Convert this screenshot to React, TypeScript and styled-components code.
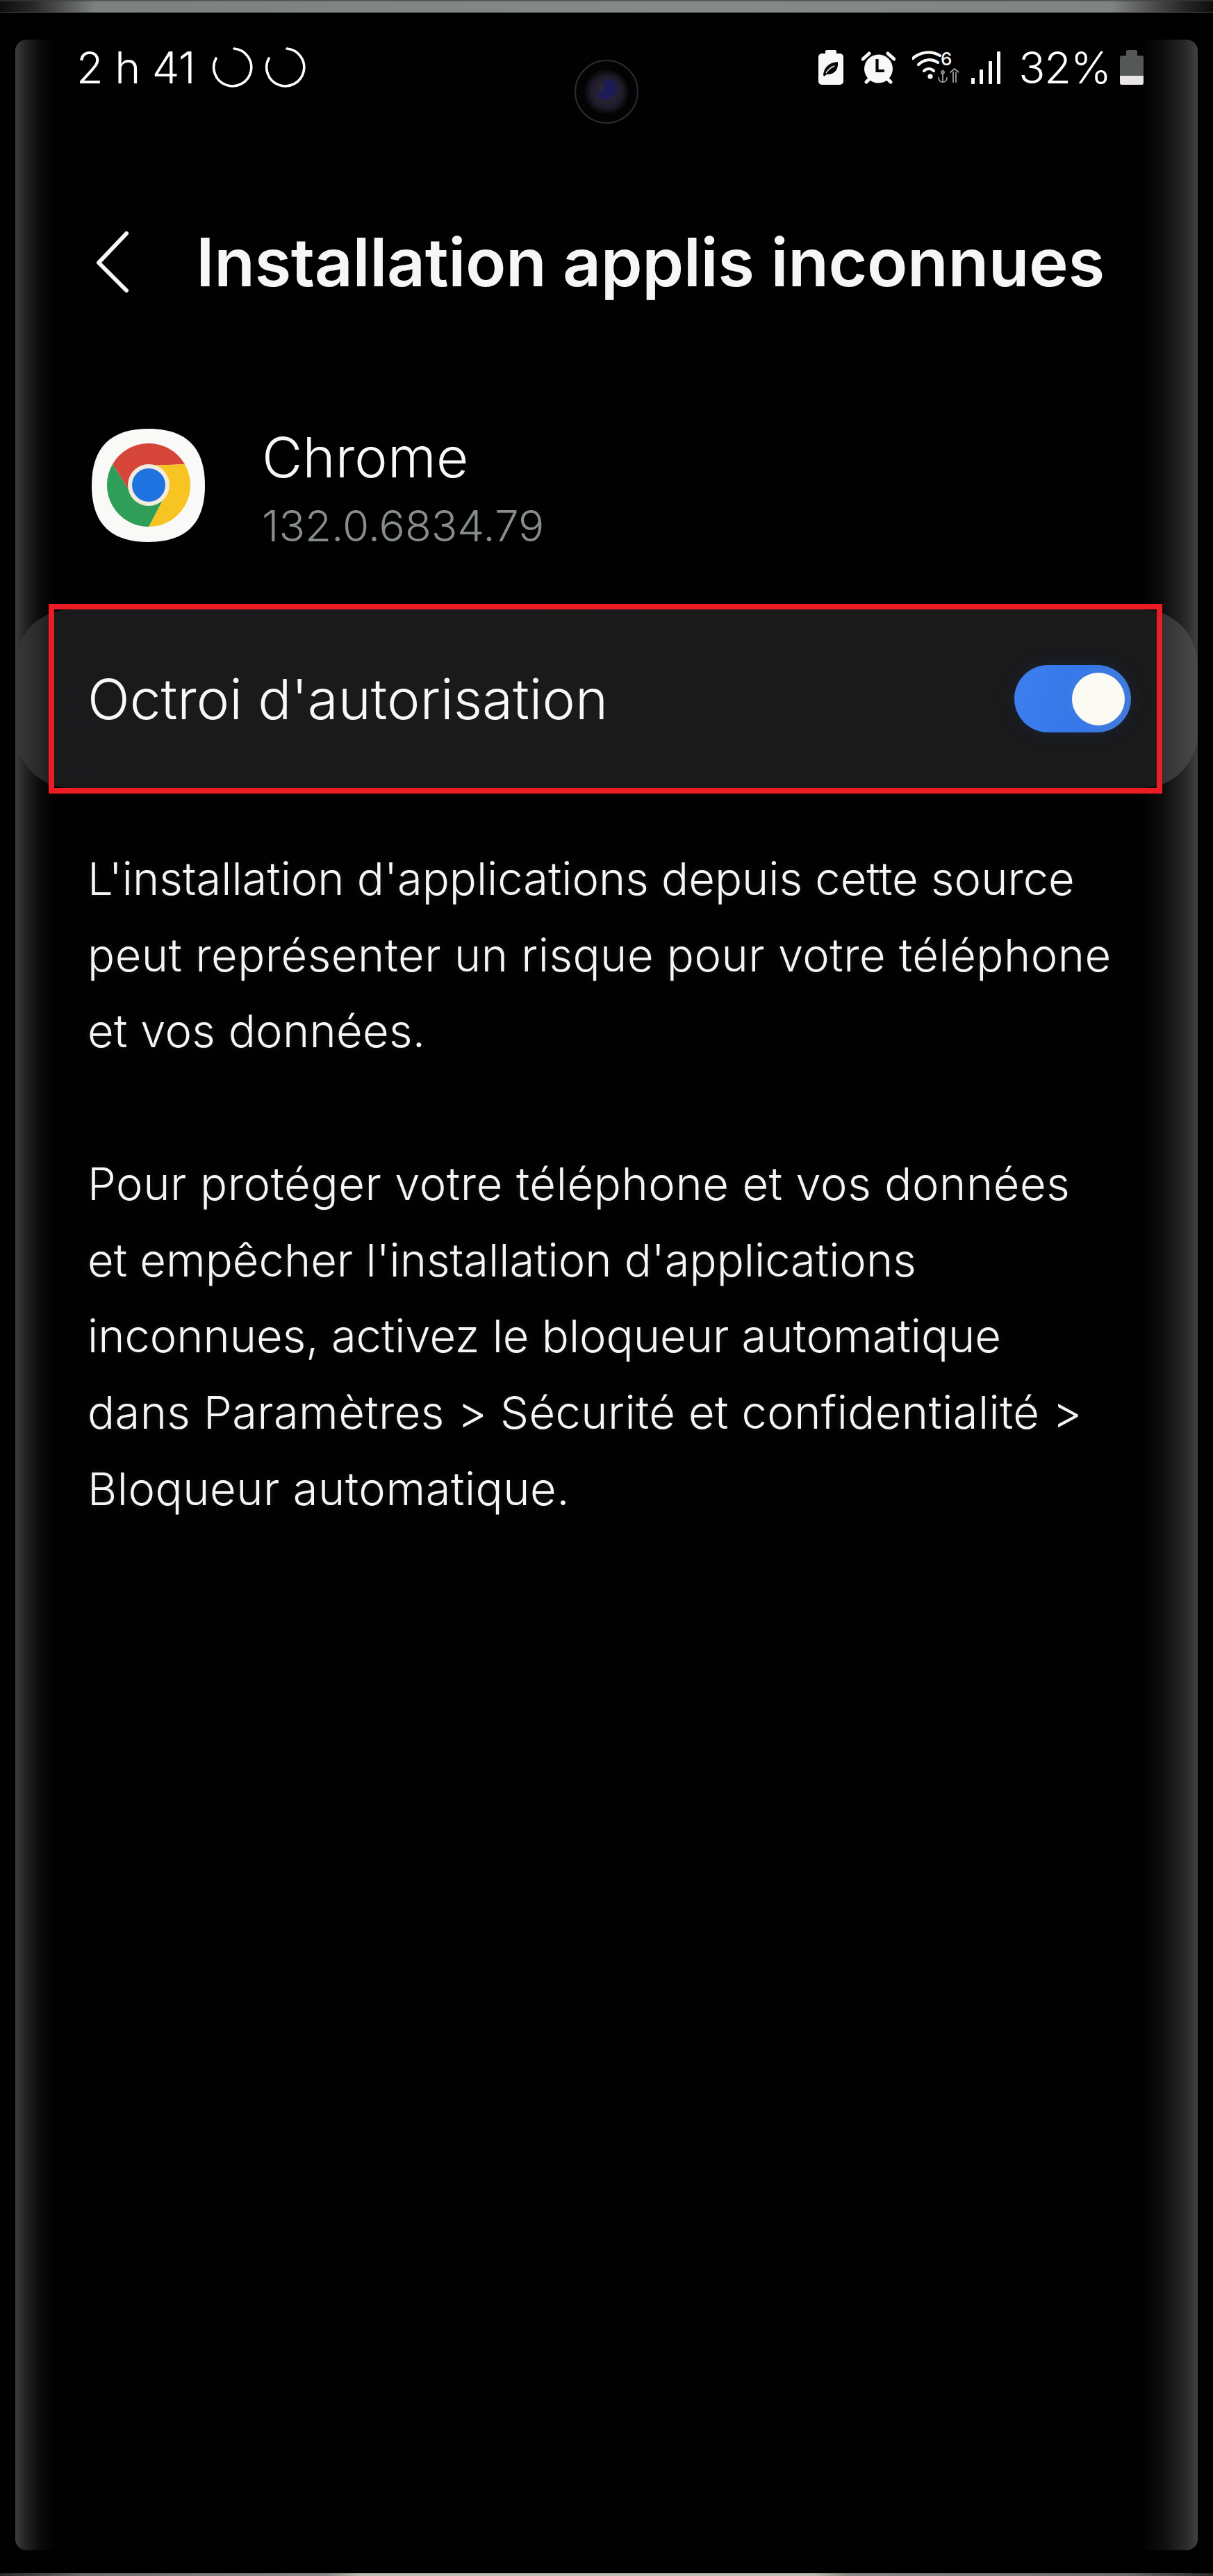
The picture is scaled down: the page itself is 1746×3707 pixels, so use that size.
import React from "react";
import styled, { createGlobalStyle } from "styled-components";

const Global = createGlobalStyle`
  html, body { margin: 0; padding: 0; background: #000; }
  #root { width: 1746px; height: 3707px; overflow: hidden; }
`;

const Device = styled.div`
  width: 1746px;
  height: 3707px;
  display: flex;
  flex-direction: column;
  background: #000;
  color: #fff;
  font-family: Inter, "Liberation Sans", sans-serif;
`;

const TopBezel = styled.div`
  height: 18px;
  flex: none;
  background: linear-gradient(90deg, #0d0d0d 0, #2a2a2a 50px, #7c807f 135px, #858988 1000px, #7f8382 1600px, #2a2a2a 1700px, #0d0d0d 1746px);
  box-shadow: inset 0 2px 0 rgba(60, 60, 60, 0.6), inset 0 -1px 0 rgba(190, 190, 190, 0.35);
`;

const BezelCorners = styled.div`
  flex: 1;
  min-height: 0;
  display: flex;
  background: #000;
  border-radius: 22px 22px 0 0;
  padding: 39px 22px 33px;
  position: relative;
`;

const Panel = styled.main`
  flex: 1;
  min-width: 0;
  display: flex;
  flex-direction: column;
  border-radius: 16px;
  background:
    linear-gradient(90deg, #3c3e3e 0, #232424 14px, #0b0b0b 36px, rgba(0, 0, 0, 0) 56px),
    linear-gradient(270deg, #404242 0, #272828 18px, #0d0d0d 50px, rgba(0, 0, 0, 0) 82px),
    #010101;
`;

const StatusBar = styled.header`
  height: 80px;
  flex: none;
  display: flex;
  align-items: center;
  justify-content: space-between;
  padding: 0 78px 0 88px;
  font-size: 63px;
  font-weight: 300;
  line-height: 1;
`;

const StatusGroup = styled.div`
  display: flex;
  align-items: center;
`;

const Clock = styled.span`
  letter-spacing: -0.6px;
  margin-right: 24px;
`;

const SyncRing = styled.svg`
  width: 60px;
  height: 60px;
  margin-right: 16px;
  display: block;
`;

const StatusIcon = styled.svg<{ $gap: number }>`
  display: block;
  flex: none;
  margin-right: ${(p) => p.$gap}px;
`;

const Percent = styled.span`
  letter-spacing: -1px;
  margin-right: 13px;
`;

const Camera = styled.svg`
  position: absolute;
  left: 826px;
  top: 67px;
  width: 94px;
  height: 94px;
`;

const TitleBar = styled.div`
  display: flex;
  align-items: center;
  height: 165px;
  margin-top: 157px;
  padding-left: 116px;
  flex: none;
`;

const BackChevron = styled.svg`
  width: 48px;
  height: 90px;
  margin-right: 96px;
  flex: none;
`;

const Title = styled.h1`
  margin: 0;
  font-size: 96px;
  font-weight: 600;
  letter-spacing: -0.4px;
  line-height: 1;
  color: #f6f6f6;
  white-space: nowrap;
`;

const AppRow = styled.section`
  display: flex;
  align-items: center;
  height: 163px;
  margin-top: 158px;
  padding-left: 110px;
  flex: none;
`;

const AppIcon = styled.svg`
  width: 163px;
  height: 163px;
  margin-right: 82px;
  flex: none;
`;

const AppText = styled.div`
  display: flex;
  flex-direction: column;
  gap: 18px;
  padding-top: 6px;
`;

const AppName = styled.span`
  font-size: 80px;
  font-weight: 350;
  letter-spacing: 0.2px;
  line-height: 92px;
  color: #f8f8f8;
`;

const AppVersion = styled.span`
  font-size: 62px;
  font-weight: 300;
  line-height: 70px;
  color: #868d8b;
`;

const PermissionCard = styled.section`
  position: relative;
  height: 257px;
  margin-top: 97px;
  flex: none;
  display: flex;
  align-items: center;
  justify-content: space-between;
  padding: 0 96px 0 104px;
  border-radius: 80px;
  background: linear-gradient(90deg, #3a3a3a 0, #262626 40px, #1a1a1c 56px, #1a1a1b 1640px, #202020 1648px, #343434 1654px, #4a4a4a 1702px);
`;

const Highlight = styled.div`
  position: absolute;
  left: 48px;
  right: 51px;
  top: -8px;
  bottom: -8px;
  border: 8px solid #ed1c24;
  pointer-events: none;
`;

const PermissionLabel = styled.span`
  font-size: 80px;
  font-weight: 350;
  color: #f8f8f8;
`;

const Toggle = styled.div`
  width: 168px;
  height: 97px;
  border-radius: 49px;
  background: linear-gradient(100deg, #3e7eee 0, #3577e8 60%, #3f78d8 100%);
  box-shadow: 0 0 26px rgba(30, 80, 170, 0.18);
  display: flex;
  align-items: center;
  justify-content: flex-end;
  padding-right: 9px;
  box-sizing: border-box;
`;

const ToggleKnob = styled.div`
  width: 76px;
  height: 76px;
  border-radius: 50%;
  background: #fbfaf3;
  box-shadow: 0 0 0 8px rgba(90, 140, 225, 0.12);
`;

const Notes = styled.section`
  margin-top: 76px;
  padding-left: 104px;
  font-size: 65px;
  font-weight: 300;
  line-height: 109.7px;
  color: #f6f6f6;
  text-shadow: 0 0 10px rgba(255, 255, 255, 0.12);
  display: flex;
  flex-direction: column;
  gap: 109.7px;
`;

const Paragraph = styled.p`
  margin: 0;
`;

// Each line is set on its own because the copy breaks at fixed places.
const Line = styled.span<{ $track?: number }>`
  display: block;
  white-space: nowrap;
  letter-spacing: ${(p) => p.$track ?? 0}px;
`;

const BottomBezel = styled.div`
  height: 4px;
  flex: none;
  background: linear-gradient(90deg, #2a2a2a 0, #6d6f6c 120px, #8a8b86 470px, #bcbdb1 520px, #bcbdb1 1170px, #8a8b86 1220px, #6d6f6c 1620px, #2a2a2a 1746px);
  box-shadow: 0 -10px 14px rgba(120, 120, 110, 0.1);
`;

const SyncIcon = () => (
  <SyncRing viewBox="0 0 60 60" fill="none" stroke="#fff" strokeWidth="3.6" strokeLinecap="round">
    <path d="M32 3 A27 27 0 1 1 6 17" />
  </SyncRing>
);

const BatterySaver = () => (
  <StatusIcon $gap={26} width="36" height="50" viewBox="0 0 36 50">
    <rect x="10" y="0" width="16" height="6" rx="2" fill="#f8f8f6" />
    <rect x="0" y="5" width="36" height="45" rx="5" fill="#f8f8f6" />
    <path d="M7 36 C8 25 15 18 28 17 C29 27 24 36 12 35 L8 38 Z" fill="#050505" />
    <path d="M11 33 C14 28 18 25 23 23" stroke="#f8f8f6" strokeWidth="1.4" fill="none" />
  </StatusIcon>
);

const Alarm = () => (
  <StatusIcon $gap={24} width="49" height="47" viewBox="0 0 49 47">
    <circle cx="24.5" cy="25" r="20.5" fill="#f8f8f6" />
    <path d="M2 11 L11 3 M47 11 L38 3" stroke="#f8f8f6" strokeWidth="5" strokeLinecap="round" />
    <path d="M7 44 L11 40 M42 44 L38 40" stroke="#f8f8f6" strokeWidth="5" strokeLinecap="round" />
    <path d="M22.5 11 V28 H33" stroke="#050505" strokeWidth="4.2" fill="none" />
  </StatusIcon>
);

const Wifi = () => (
  <StatusIcon $gap={18} width="67" height="56" viewBox="0 -4 67 56">
    <g fill="none" stroke="#f8f8f6" strokeWidth="4.2" strokeLinecap="round">
      <path d="M1 11 C12 1 28 0 40 7" />
      <path d="M9 20 C17 12 28 11 37 17" />
      <path d="M17 29 C21 25 27 25 31 29" />
    </g>
    <circle cx="26" cy="37" r="3.6" fill="#f8f8f6" />
    <text x="41" y="21" fontFamily="Inter, sans-serif" fontSize="26" fontWeight="500" fill="#f8f8f6">6</text>
    <g fill="none" stroke="#9c9c9c" strokeWidth="1.8" strokeLinecap="round">
      <path d="M44 32 V43 M38 39 C38 47 50 47 50 39" />
      <circle cx="44" cy="31" r="2" />
      <path d="M55 31 L61 26 L67 31 M59 31 V45 M63 31 V45" />
    </g>
  </StatusIcon>
);

const Signal = () => (
  <StatusIcon $gap={26} width="42" height="47" viewBox="0 0 42 47" aria-hidden>
    <rect x="0" y="38" width="5" height="9" fill="#f8f8f6" rx="1" />
    <rect x="12" y="26" width="5" height="21" fill="#f8f8f6" rx="1" />
    <rect x="25" y="14" width="5" height="33" fill="#f8f8f6" rx="1" />
    <rect x="37" y="0" width="5" height="47" fill="#f8f8f6" rx="1" />
  </StatusIcon>
);

const Battery = () => (
  <StatusIcon $gap={0} width="34" height="50" viewBox="0 0 34 50">
    <rect x="9" y="0" width="16" height="9" rx="2" fill="#565858" />
    <rect x="0" y="8" width="34" height="42" rx="3" fill="#565858" />
    <path d="M0 37 H34 V47 A3 3 0 0 1 31 50 H3 A3 3 0 0 1 0 47 Z" fill="#e9e5e5" />
  </StatusIcon>
);

const FrontCamera = () => (
  <Camera viewBox="0 0 94 94">
    <defs>
      <radialGradient id="lensGlow">
        <stop offset="0" stopColor="#2d2a3f" />
        <stop offset="0.7" stopColor="#1f1d2a" />
        <stop offset="1" stopColor="#07070a" />
      </radialGradient>
    </defs>
    <circle cx="47" cy="47" r="45" fill="#030304" stroke="#2b2b30" strokeWidth="2" />
    <circle cx="47" cy="47" r="32" fill="url(#lensGlow)" />
    <path d="M46 30 C54 26 63 33 61 44 C59 54 49 60 40 58 C34 56 33 50 38 48 C45 46 42 36 46 30 Z" fill="#1d1c58" />
  </Camera>
);

const ChromeIcon = () => (
  <AppIcon viewBox="0 0 163 163">
    <path d="M81.5 0 C136 0 163 27 163 81.5 C163 136 136 163 81.5 163 C27 163 0 136 0 81.5 C0 27 27 0 81.5 0 Z" fill="#f9f9f7" />
    <g transform="translate(82 81)">
      <path d="M-52 -30 A60 60 0 0 1 52 -30 L0 -28 L0 0 L-24.2 14 Z" fill="#d5453a" />
      <path d="M52 -30 A60 60 0 0 1 0 60 L24.2 14 L0 0 L0 -28 Z" fill="#f8c421" />
      <path d="M0 60 A60 60 0 0 1 -52 -30 L-24.2 14 L0 0 L24.2 14 Z" fill="#2f9e58" />
      <circle r="30" fill="#f3ebdc" />
      <circle r="24" fill="#1f73e0" />
    </g>
  </AppIcon>
);

export default function App() {
  return (
    <Device>
      <Global />
      <TopBezel />
      <BezelCorners>
        <FrontCamera />
        <Panel>
          <StatusBar>
            <StatusGroup>
              <Clock>2 h 41</Clock>
              <SyncIcon />
              <SyncIcon />
            </StatusGroup>
            <StatusGroup>
              <BatterySaver />
              <Alarm />
              <Wifi />
              <Signal />
              <Percent>32%</Percent>
              <Battery />
            </StatusGroup>
          </StatusBar>

          <TitleBar>
            <BackChevron viewBox="0 0 48 90" fill="none" stroke="#f6f6f6" strokeWidth="6" strokeLinecap="round" strokeLinejoin="round">
              <path d="M44 4 L4 46 L44 86" />
            </BackChevron>
            <Title>Installation applis inconnues</Title>
          </TitleBar>

          <AppRow>
            <ChromeIcon />
            <AppText>
              <AppName>Chrome</AppName>
              <AppVersion>132.0.6834.79</AppVersion>
            </AppText>
          </AppRow>

          <PermissionCard>
            <PermissionLabel>Octroi d'autorisation</PermissionLabel>
            <Toggle>
              <ToggleKnob />
            </Toggle>
            <Highlight />
          </PermissionCard>

          <Notes>
            <Paragraph>
              <Line>L'installation d'applications depuis cette source</Line>
              <Line $track={0.5}>peut représenter un risque pour votre téléphone</Line>
              <Line $track={0.3}>et vos données.</Line>
            </Paragraph>
            <Paragraph>
              <Line $track={0.6}>Pour protéger votre téléphone et vos données</Line>
              <Line>et empêcher l'installation d'applications</Line>
              <Line>inconnues, activez le bloqueur automatique</Line>
              <Line $track={0.4}>dans Paramètres &gt; Sécurité et confidentialité &gt;</Line>
              <Line $track={0.55}>Bloqueur automatique.</Line>
            </Paragraph>
          </Notes>
        </Panel>
      </BezelCorners>
      <BottomBezel />
    </Device>
  );
}
